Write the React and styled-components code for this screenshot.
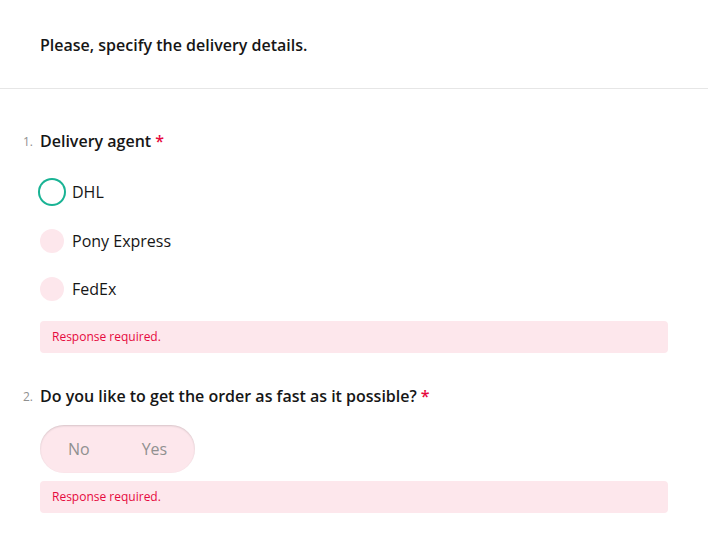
import React from 'react';
import styled, { createGlobalStyle } from 'styled-components';

const GlobalStyle = createGlobalStyle`
  html, body {
    margin: 0;
    padding: 0;
    background: #ffffff;
  }
  body {
    font-family: "Open Sans", "Liberation Sans", sans-serif;
    color: #161616;
  }
`;

const Survey = styled.div`
  width: 708px;
  min-height: 553px;
  background: #ffffff;
`;

const Header = styled.div`
  padding: 33px 40px 31px;
  border-bottom: 1px solid #e6e6e6;
`;

const SurveyTitle = styled.h3`
  margin: 0;
  font-size: 16px;
  line-height: 24px;
  font-weight: 600;
`;

const Body = styled.div`
  padding: 40px 40px 0;
  display: flex;
  flex-direction: column;
  gap: 31px;
`;

const Question = styled.div`
  display: flex;
  flex-direction: column;
`;

const QuestionTitle = styled.h5`
  position: relative;
  margin: 0;
  font-size: 16px;
  line-height: 24px;
  font-weight: 600;
`;

const Number = styled.span`
  position: absolute;
  right: 100%;
  top: 1px;
  margin-right: 7px;
  font-size: 12px;
  font-weight: 400;
  color: #909090;
`;

const Required = styled.span`
  color: #e60a3e;
  margin-left: 4px;
`;

const Choices = styled.div`
  display: flex;
  flex-direction: column;
  margin-top: 15px;
`;

const Choice = styled.label`
  display: flex;
  align-items: center;
  gap: 8px;
  height: 48.5px;
  font-size: 16px;
  line-height: 24px;
`;

const Circle = styled.span`
  box-sizing: border-box;
  width: 24px;
  height: 24px;
  border-radius: 50%;
  background: ${({ $focused }) => ($focused ? '#ffffff' : '#fde7ec')};
  box-shadow: ${({ $focused }) => ($focused ? '0 0 0 2px #19b394' : 'none')};
`;

const Toggle = styled.div`
  display: inline-flex;
  align-self: flex-start;
  align-items: center;
  height: 48px;
  margin-top: 17px;
  padding: 0 4px;
  border-radius: 24px;
  background: #fde7ec;
  box-shadow: inset 0 1px 2px rgba(0, 0, 0, 0.15);
`;

const ToggleLabel = styled.span`
  display: inline-block;
  padding: 0 24px 0 ${({ $left }) => $left}px;
  font-size: 16px;
  line-height: 24px;
  color: #909090;
`;

const Error = styled.div`
  margin-top: ${({ $gap }) => $gap}px;
  height: 32px;
  display: flex;
  align-items: center;
  padding: 0 12px;
  border-radius: 4px;
  background: #fde7ec;
  color: #e60a3e;
  font-size: 12px;
  line-height: 16px;
`;

const App = () => {
  const agents = ['DHL', 'Pony Express', 'FedEx'];
  return (
    <Survey>
      <GlobalStyle />
      <Header>
        <SurveyTitle>Please, specify the delivery details.</SurveyTitle>
      </Header>
      <Body>
        <Question>
          <QuestionTitle>
            <Number>1.</Number>
            Delivery agent<Required>*</Required>
          </QuestionTitle>
          <Choices>
            {agents.map((a, i) => (
              <Choice key={a}>
                <Circle $focused={i === 0} />
                {a}
              </Choice>
            ))}
          </Choices>
          <Error $gap={7}>Response required.</Error>
        </Question>
        <Question>
          <QuestionTitle>
            <Number>2.</Number>
            Do you like to get the order as fast as it possible?<Required>*</Required>
          </QuestionTitle>
          <Toggle>
            <ToggleLabel $left={24}>No</ToggleLabel>
            <ToggleLabel $left={28}>Yes</ToggleLabel>
          </Toggle>
          <Error $gap={8}>Response required.</Error>
        </Question>
      </Body>
    </Survey>
  );
};

export default App;
